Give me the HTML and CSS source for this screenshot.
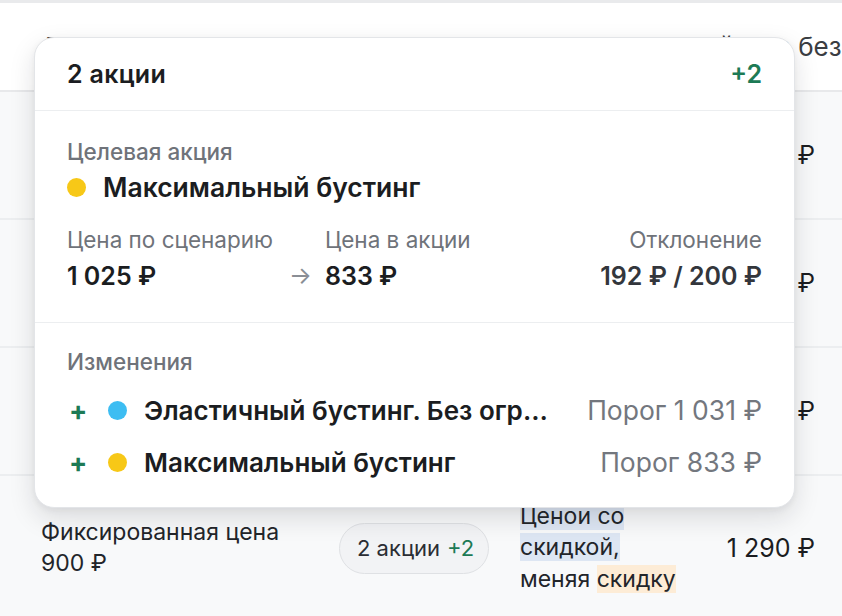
FILE: index.html
```html
<!DOCTYPE html>
<html lang="ru">
<head>
<meta charset="utf-8">
<link rel="stylesheet" href="styles.css">
</head>
<body>
<div class="page">
  <div class="topbar"></div>
  <div class="table">
    <div class="thead">
      <div class="th">Гипотеза</div>
      <div class="th"></div>
      <div class="th">Цена со скидкой</div>
      <div class="th th-right">Цена без скидки</div>
    </div>
    <div class="row">
      <div class="cell"></div><div class="cell"></div><div class="cell"></div>
      <div class="cell num">1 100 ₽</div>
    </div>
    <div class="row">
      <div class="cell"></div><div class="cell"></div><div class="cell"></div>
      <div class="cell num">1 150 ₽</div>
    </div>
    <div class="row">
      <div class="cell"></div><div class="cell"></div><div class="cell"></div>
      <div class="cell num">1 200 ₽</div>
    </div>
    <div class="row last">
      <div class="cell text">Фиксированная цена<br>900 ₽</div>
      <div class="cell"><span class="pill">2 акции <span class="green">+2</span></span></div>
      <div class="cell text"><span class="hl-blue">Ценои со скидкой,</span><br>меняя <span class="hl-orange">скидку</span></div>
      <div class="cell num">1 290 ₽</div>
    </div>
  </div>

  <div class="popover">
    <div class="pop-head">
      <span class="pop-title">2 акции</span>
      <span class="pop-count">+2</span>
    </div>
    <div class="pop-section target">
      <div class="label strong">Целевая акция</div>
      <div class="promo-title"><span class="dot yellow"></span>Максимальный бустинг</div>
      <div class="metrics">
        <div class="label">Цена по сценарию</div>
        <div></div>
        <div class="label">Цена в акции</div>
        <div class="label right">Отклонение</div>
        <div class="value">1 025 ₽</div>
        <div class="arrow">→</div>
        <div class="value">833 ₽</div>
        <div class="value right soft">192 ₽ / 200 ₽</div>
      </div>
    </div>
    <div class="pop-section changes">
      <div class="label strong">Изменения</div>
      <div class="change">
        <span class="plus">+</span>
        <span class="dot blue"></span>
        <span class="change-name">Эластичный бустинг. Без ограничений</span>
        <span class="threshold">Порог 1 031 ₽</span>
      </div>
      <div class="change">
        <span class="plus">+</span>
        <span class="dot yellow"></span>
        <span class="change-name">Максимальный бустинг</span>
        <span class="threshold">Порог 833 ₽</span>
      </div>
    </div>
  </div>
</div>
</body>
</html>
```

FILE: styles.css
```css
* { box-sizing: border-box; }
html, body { margin: 0; padding: 0; }
body {
  font-family: Inter, "Noto Sans", sans-serif;
  color: #1b1d21;
  background: #ffffff;
  width: 842px;
  height: 616px;
  overflow: hidden;
}
.page {
  position: relative;
  width: 842px;
  height: 616px;
  overflow: hidden;
}
.topbar {
  height: 3px;
  background: #e9eaec;
}
.table {
  display: flex;
  flex-direction: column;
}
.thead, .row {
  display: grid;
  grid-template-columns: 298px 181px 165px 1fr;
  padding: 0 27px 0 41px;
}
.thead {
  height: 89px;
  border-bottom: 2px solid #e8e9eb;
  background: #ffffff;
  align-items: start;
  padding-top: 28px;
}
.th {
  font-size: 26px;
  line-height: 32px;
  color: #3a3d42;
  white-space: nowrap;
}
.th:first-child { padding-left: 4px; }
.th-right { padding-left: 42px; }
.row {
  height: 128px;
  border-bottom: 2px solid #eceef0;
  background: #f8f9fa;
  align-items: center;
}
.row.last {
  height: 146px;
  border-bottom: none;
  padding-bottom: 2px;
}
.cell { font-size: 24px; color: #22252a; }
.cell.num { text-align: right; font-size: 25px; color: #1b1d21; }
.cell.text { font-size: 23px; line-height: 31.5px; }
.pill {
  display: inline-flex;
  align-items: center;
  gap: 7px;
  height: 51px;
  padding: 0 14px 0 17px;
  border-radius: 26px;
  border: 1px solid #dfe1e4;
  background: #f2f3f5;
  font-size: 22px;
  color: #2a2d33;
}
.green { color: #1d7a55; }
.hl-blue { background: #dde6f3; }
.hl-orange { background: #fdecd6; }

.popover {
  position: absolute;
  left: 34px;
  top: 37px;
  width: 761px;
  height: 471px;
  background: #ffffff;
  border: 1px solid #e3e5e8;
  border-radius: 20px;
  box-shadow: 0 10px 26px rgba(20, 24, 32, 0.13), 0 2px 6px rgba(20, 24, 32, 0.05);
  display: flex;
  flex-direction: column;
}
.pop-head {
  height: 73px;
  padding: 0 32px;
  display: flex;
  align-items: center;
  justify-content: space-between;
  border-bottom: 1px solid #eceef0;
  font-size: 25px;
  font-weight: 600;
}
.pop-title { letter-spacing: 0.3px; }
.pop-count { color: #1d7a55; font-weight: 600; }
.pop-section {
  padding: 0 32px;
}
.target {
  padding-top: 27px;
  padding-bottom: 29px;
  border-bottom: 1px solid #eceef0;
}
.label {
  font-size: 22.5px;
  line-height: 28px;
  color: #6f737a;
  font-weight: 400;
  white-space: nowrap;
}
.label.strong { font-weight: 500; }
.promo-title {
  display: flex;
  align-items: center;
  gap: 17px;
  margin-top: 4px;
  font-size: 26.5px;
  line-height: 34px;
  font-weight: 600;
}
.dot {
  width: 19px;
  height: 19px;
  border-radius: 50%;
  flex: none;
}
.yellow { background: #f7c817; }
.blue { background: #3dbdf2; }
.metrics {
  display: grid;
  grid-template-columns: 222px 36px auto 1fr;
  row-gap: 5px;
  margin-top: 22px;
  align-items: center;
}
.right { text-align: right; }
.value {
  font-size: 25px;
  line-height: 34px;
  font-weight: 600;
}
.value.soft { color: #33363c; }
.arrow {
  font-size: 24px;
  line-height: 34px;
  color: #8a8e95;
}
.changes {
  padding-top: 25px;
  padding-bottom: 28px;
}
.change {
  display: flex;
  align-items: center;
  height: 34px;
  margin-top: 17px;
  font-size: 26px;
}
.change + .change { margin-top: 18px; }
.plus {
  width: 20px;
  margin-left: 2px;
  color: #1d7a55;
  font-weight: 700;
  font-size: 27px;
}
.change .dot { margin-left: 19px; }
.change-name {
  flex: 1;
  min-width: 0;
  margin-left: 17px;
  font-weight: 600;
  white-space: nowrap;
  overflow: hidden;
  text-overflow: ellipsis;
}
.threshold {
  flex: none;
  margin-left: 26px;
  color: #73777e;
  font-size: 26.5px;
}
```
